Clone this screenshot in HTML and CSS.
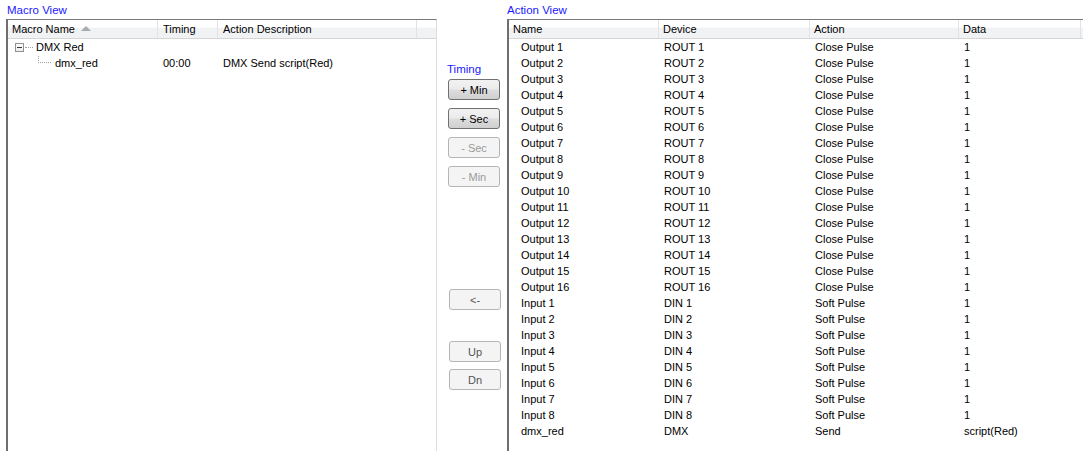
FILE: index.html
```html
<!DOCTYPE html>
<html>
<head>
<meta charset="utf-8">
<link rel="stylesheet" href="styles.css">
</head>
<body>
<div class="app">
  <section class="left">
    <div class="panel-title">Macro View</div>
    <div class="listbox">
      <div class="hdr macro-cols">
        <div class="hc first">Macro Name<span class="sort"></span></div>
        <div class="hc">Timing</div>
        <div class="hc">Action Description</div>
        <div class="hc filler"></div>
      </div>
      <div class="row macro-cols">
        <div class="cell tree">
          <span class="expander"></span><span class="hdots"></span><span class="tlabel">DMX Red</span>
        </div>
        <div class="cell"></div>
        <div class="cell"></div>
      </div>
      <div class="row macro-cols">
        <div class="cell tree child">
          <span class="elbow"></span><span class="tlabel">dmx_red</span>
        </div>
        <div class="cell">00:00</div>
        <div class="cell">DMX Send script(Red)</div>
      </div>
    </div>
  </section>

  <section class="mid">
    <div class="timing-label">Timing</div>
    <button class="btn on b-min">+ Min</button>
    <button class="btn on gap8">+ Sec</button>
    <button class="btn off gap8">- Sec</button>
    <button class="btn off gap8">- Min</button>
    <button class="btn off2 b-left">&lt;-</button>
    <button class="btn off2 b-up">Up</button>
    <button class="btn off2 b-dn">Dn</button>
  </section>

  <section class="right">
    <div class="panel-title">Action View</div>
    <div class="listbox rlist">
      <div class="hdr action-cols">
        <div class="hc">Name</div>
        <div class="hc">Device</div>
        <div class="hc">Action</div>
        <div class="hc">Data</div>
        <div class="hc filler"></div>
      </div>
      <div id="rows"></div>
    </div>
  </section>
</div>
<script src="app.js"></script>
</body>
</html>
```

FILE: app.js
```js
(function () {
  var rows = [];
  for (var i = 1; i <= 16; i++) rows.push(["Output " + i, "ROUT " + i, "Close Pulse", "1"]);
  for (var j = 1; j <= 8; j++) rows.push(["Input " + j, "DIN " + j, "Soft Pulse", "1"]);
  rows.push(["dmx_red", "DMX", "Send", "script(Red)"]);
  var host = document.getElementById("rows");
  rows.forEach(function (r) {
    var row = document.createElement("div");
    row.className = "row action-cols";
    r.forEach(function (t, k) {
      var c = document.createElement("div");
      c.className = "cell" + (k === 0 ? " name" : "");
      c.textContent = t;
      row.appendChild(c);
    });
    host.appendChild(row);
  });
})();
```

FILE: styles.css
```css
* { box-sizing: border-box; }
html, body {
  margin: 0;
  padding: 0;
  background: #ffffff;
  font-family: "Liberation Sans", Arial, sans-serif;
  font-size: 11px;
  color: #000;
  overflow: hidden;
}
.app {
  display: flex;
  height: 451px;
  width: 1083px;
}
.panel-title {
  height: 19px;
  line-height: 20px;
  color: #1a1aff;
  padding-left: 7px;
  font-size: 11.5px;
}
.left {
  width: 437px;
  flex: none;
  display: flex;
  flex-direction: column;
}
.left .listbox {
  margin-left: 6px;
  border-right: 1px solid #dcdcdc;
}
.listbox {
  flex: 1;
  border-left: 2px solid #6f6f6f;
  border-top: 1px solid #7a7a7a;
  background: #fff;
}
.hdr {
  height: 19px;
  background: linear-gradient(#ffffff 0%, #ffffff 40%, #f1f2f4 45%, #f1f2f4 100%);
  border-bottom: 1px solid #d5d5d5;
}
.macro-cols {
  display: grid;
  grid-template-columns: 150px 60px 199px 1fr;
}
.action-cols {
  display: grid;
  grid-template-columns: 150px 151px 149px 122px 1fr;
}
.hc {
  border-right: 1px solid #e2e3e6;
  padding-left: 4px;
  line-height: 18px;
  white-space: nowrap;
  position: relative;
}
.macro-cols .hc { padding-left: 5px; }
.macro-cols .hc.first { padding-left: 4px; }
.hc.filler { border-right: none; }
.sort {
  display: inline-block;
  width: 0;
  height: 0;
  margin-left: 6px;
  border-left: 5px solid transparent;
  border-right: 5px solid transparent;
  border-bottom: 5px solid #a7abb0;
  vertical-align: 2px;
}
.row {
  height: 16px;
  line-height: 16px;
}
.cell {
  padding-left: 5px;
  white-space: nowrap;
  overflow: hidden;
}
.cell.name { padding-left: 12px; }
.tree {
  display: flex;
  align-items: center;
  padding-left: 7px;
}
.expander {
  width: 9px;
  height: 9px;
  border: 1px solid #929292;
  background: linear-gradient(#ffffff, #ececec);
  position: relative;
  flex: none;
}
.expander::after {
  content: "";
  position: absolute;
  left: 1px;
  top: 3px;
  width: 5px;
  height: 1px;
  background: #3a3a3a;
}
.hdots {
  width: 8px;
  height: 1px;
  margin-left: 1px;
  border-top: 1px dotted #a0a0a0;
  flex: none;
}
.tlabel { margin-left: 3px; }
.tree.child { padding-left: 30px; }
.elbow {
  width: 13px;
  height: 16px;
  border-left: 1px dotted #a0a0a0;
  border-bottom: 1px dotted #a0a0a0;
  transform: translateY(-8px);
  flex: none;
}
.tree.child .tlabel { margin-left: 4px; }

.mid {
  width: 70px;
  flex: none;
  display: flex;
  flex-direction: column;
  padding-top: 62px;
  padding-left: 11px;
}
.timing-label {
  color: #1a1aff;
  height: 14px;
  line-height: 14px;
  font-size: 11.5px;
  margin-left: -1px;
}
.btn {
  width: 52px;
  height: 21px;
  font-family: "Liberation Sans", Arial, sans-serif;
  font-size: 11px;
  border-radius: 3px;
  padding: 0;
  flex: none;
}
.btn.on {
  border: 1px solid #707070;
  background: linear-gradient(#f2f2f2 0%, #ebebeb 48%, #dddddd 52%, #cfcfcf 100%);
  color: #000;
}
.btn.off {
  border: 1px solid #b5b5b5;
  background: #f4f4f4;
  color: #9a9a9a;
}
.btn.off2 {
  border: 1px solid #b5b5b5;
  background: #f4f4f4;
  color: #555;
  margin-left: 1px;
}
.b-min { margin-top: 3px; }
.gap8 { margin-top: 8px; }
.b-left { margin-top: 102px; color: #8a8a8a; }
.b-up { margin-top: 31px; }
.b-dn { margin-top: 7px; }

.right {
  flex: 1;
  min-width: 0;
  display: flex;
  flex-direction: column;
}
.right .panel-title { padding-left: 0; }
.rlist { margin-left: 0; }
```
